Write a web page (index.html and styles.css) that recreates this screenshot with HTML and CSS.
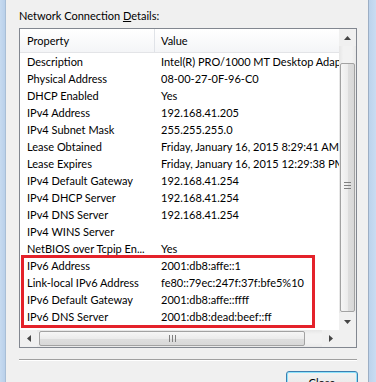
FILE: index.html
```html
<!DOCTYPE html>
<html lang="en">
<head>
  <meta charset="UTF-8" />
  <title>Network Connection Details</title>
  <link rel="stylesheet" href="styles.css">
</head>
<body>
  <div class="window">
    <div class="frameLeft"></div>

    <div class="dialog">
      <div class="caption">Network Connection <u>D</u>etails:</div>

      <div class="listview">
        <div class="lvContent">
          <div class="lvHeader">
            <div class="cell colProp">Property</div>
            <div class="cell colVal">Value</div>
          </div>
          <div class="lvRow"><div class="cell colProp">Description</div><div class="cell colVal">Intel(R) PRO/1000 MT Desktop Adapter</div></div>
          <div class="lvRow"><div class="cell colProp">Physical Address</div><div class="cell colVal">08-00-27-0F-96-C0</div></div>
          <div class="lvRow"><div class="cell colProp">DHCP Enabled</div><div class="cell colVal">Yes</div></div>
          <div class="lvRow"><div class="cell colProp">IPv4 Address</div><div class="cell colVal">192.168.41.205</div></div>
          <div class="lvRow"><div class="cell colProp">IPv4 Subnet Mask</div><div class="cell colVal">255.255.255.0</div></div>
          <div class="lvRow"><div class="cell colProp">Lease Obtained</div><div class="cell colVal">Friday, January 16, 2015 8:29:41 AM</div></div>
          <div class="lvRow"><div class="cell colProp">Lease Expires</div><div class="cell colVal">Friday, January 16, 2015 12:29:38 PM</div></div>
          <div class="lvRow"><div class="cell colProp">IPv4 Default Gateway</div><div class="cell colVal">192.168.41.254</div></div>
          <div class="lvRow"><div class="cell colProp">IPv4 DHCP Server</div><div class="cell colVal">192.168.41.254</div></div>
          <div class="lvRow"><div class="cell colProp">IPv4 DNS Server</div><div class="cell colVal">192.168.41.254</div></div>
          <div class="lvRow"><div class="cell colProp">IPv4 WINS Server</div><div class="cell colVal"></div></div>
          <div class="lvRow"><div class="cell colProp">NetBIOS over Tcpip En...</div><div class="cell colVal">Yes</div></div>
          <div class="lvRow"><div class="cell colProp">IPv6 Address</div><div class="cell colVal">2001:db8:affe::1</div></div>
          <div class="lvRow"><div class="cell colProp">Link-local IPv6 Address</div><div class="cell colVal">fe80::79ec:247f:37f:bfe5%10</div></div>
          <div class="lvRow"><div class="cell colProp">IPv6 Default Gateway</div><div class="cell colVal">2001:db8:affe::ffff</div></div>
          <div class="lvRow"><div class="cell colProp">IPv6 DNS Server</div><div class="cell colVal">2001:db8:dead:beef::ff</div></div>

          <!-- 赤枠 (IPv6) -->
          <div class="highlight"></div>
        </div>

        <div class="vscroll">
          <div class="sbBtn">
            <svg width="7" height="4" viewBox="0 0 7 4"><path d="M0 4 L3.5 0 L7 4 Z" fill="#454545"/></svg>
          </div>
          <div class="sbTrack vTrack">
            <div class="thumb vThumb"><span class="grip vGrip"></span></div>
          </div>
          <div class="sbBtn">
            <svg width="7" height="4" viewBox="0 0 7 4"><path d="M0 0 L7 0 L3.5 4 Z" fill="#454545"/></svg>
          </div>
        </div>

        <div class="hscroll">
          <div class="sbBtn">
            <svg width="4" height="7" viewBox="0 0 4 7"><path d="M4 0 L4 7 L0 3.5 Z" fill="#454545"/></svg>
          </div>
          <div class="sbTrack hTrack">
            <div class="thumb hThumb"><span class="grip hGrip"></span></div>
          </div>
          <div class="sbBtn">
            <svg width="4" height="7" viewBox="0 0 4 7"><path d="M0 0 L4 3.5 L0 7 Z" fill="#454545"/></svg>
          </div>
        </div>

        <div class="corner"></div>
      </div>

      <div class="separator"></div>

      <div class="buttons">
        <button class="btn">Close</button>
      </div>
    </div>

    <div class="frameRight"></div>
  </div>
</body>
</html>
```
FILE: styles.css
```css
* {
  box-sizing: border-box;
}
body {
  margin: 0;
  width: 376px;
  height: 382px;
  overflow: hidden;
  background: #f0f0f0;
  font-family: Lato, "Liberation Sans", sans-serif;
  font-size: 11px;
  color: #000;
}
.window {
  display: flex;
  height: 382px;
}

/* ウィンドウ枠 */
.frameLeft {
  width: 6px;
  background: linear-gradient(90deg, #c6daf0, #b9d0ea);
  border-right: 1px solid #a8bed6;
}
.frameRight {
  width: 8px;
  background: linear-gradient(90deg, #bcd3ec, #c9dcf1);
  border-left: 1px solid #9caec4;
}
.dialog {
  flex: 1;
  padding: 8px 11px 0 13px;
}
.caption {
  line-height: 16px;
  margin-bottom: 4px;
  white-space: nowrap;
}

/* リストビュー */
.listview {
  height: 320px;
  border: 1px solid #828790;
  background: #fff;
  display: grid;
  grid-template-columns: 1fr 17px;
  grid-template-rows: 1fr 17px;
}
.lvContent {
  position: relative;
  overflow: hidden;
}
.lvHeader, .lvRow {
  display: flex;
  white-space: nowrap;
}
.lvHeader {
  height: 24px;
  line-height: 23px;
  background: linear-gradient(#ffffff, #f4f5f7);
  border-bottom: 1px solid #e3e4e7;
}
.lvRow {
  height: 17px;
  line-height: 17px;
}
.cell {
  flex: none;
  overflow: hidden;
}
.colProp {
  width: 135px;
  padding-left: 7px;
}
.colVal {
  width: 260px;
  padding-left: 6px;
}
.lvHeader .colProp {
  border-right: 1px solid #e0e3e8;
}
.highlight {
  position: absolute;
  left: 1px;
  top: 226px;
  width: 294px;
  height: 73px;
  border: 3px solid #e4222a;
}

/* スクロールバー */
.vscroll, .hscroll {
  display: flex;
  background: #f0f0f0;
}
.vscroll {
  flex-direction: column;
}
.sbBtn {
  width: 17px;
  height: 17px;
  flex: none;
  display: flex;
  align-items: center;
  justify-content: center;
}
.sbTrack {
  flex: 1;
  display: flex;
}
.vTrack {
  flex-direction: column;
  padding: 17px 0 1px;
  background: linear-gradient(90deg, #e6e6e6, #f2f2f2 25%, #f2f2f2 75%, #e9e9e9);
}
.hTrack {
  padding: 0 17px 0 2px;
  background: linear-gradient(#e6e6e6, #f2f2f2 25%, #f2f2f2 75%, #e9e9e9);
}
.thumb {
  flex: 1;
  border: 1px solid #a2a2a2;
  border-radius: 2px;
  display: flex;
  align-items: center;
  justify-content: center;
}
.vThumb {
  margin: 0 1px;
  background: linear-gradient(90deg, #f6f6f6, #ececec 50%, #dedede 51%, #d8d8d8);
}
.hThumb {
  margin: 1px 0;
  background: linear-gradient(#f6f6f6, #ececec 50%, #dedede 51%, #d8d8d8);
}
.grip {
  display: block;
}
.vGrip {
  width: 7px;
  height: 7px;
  margin-top: -4px;
  background: repeating-linear-gradient(#7f7f7f 0 1px, transparent 1px 3px);
}
.hGrip {
  width: 7px;
  height: 7px;
  background: repeating-linear-gradient(90deg, #7f7f7f 0 1px, transparent 1px 3px);
}
.corner {
  background: #f0f0f0;
}

/* 区切り線 */
.separator {
  margin-top: 11px;
  height: 2px;
  border-top: 1px solid #a0a0a0;
  border-bottom: 1px solid #ffffff;
}

/* ボタン */
.buttons {
  display: flex;
  justify-content: flex-end;
  margin-top: 10px;
  margin-right: -1px;
}
.btn {
  width: 72px;
  height: 23px;
  font-family: Lato, "Liberation Sans", sans-serif;
  font-size: 11px;
  color: #000;
  border: 1px solid #3c7fb1;
  border-radius: 3px;
  background: linear-gradient(#f2f2f2, #ebebeb 50%, #dddddd 51%, #cfcfcf);
  box-shadow: inset 0 0 0 1px #8ee3fb;
  padding: 0;
}
```
